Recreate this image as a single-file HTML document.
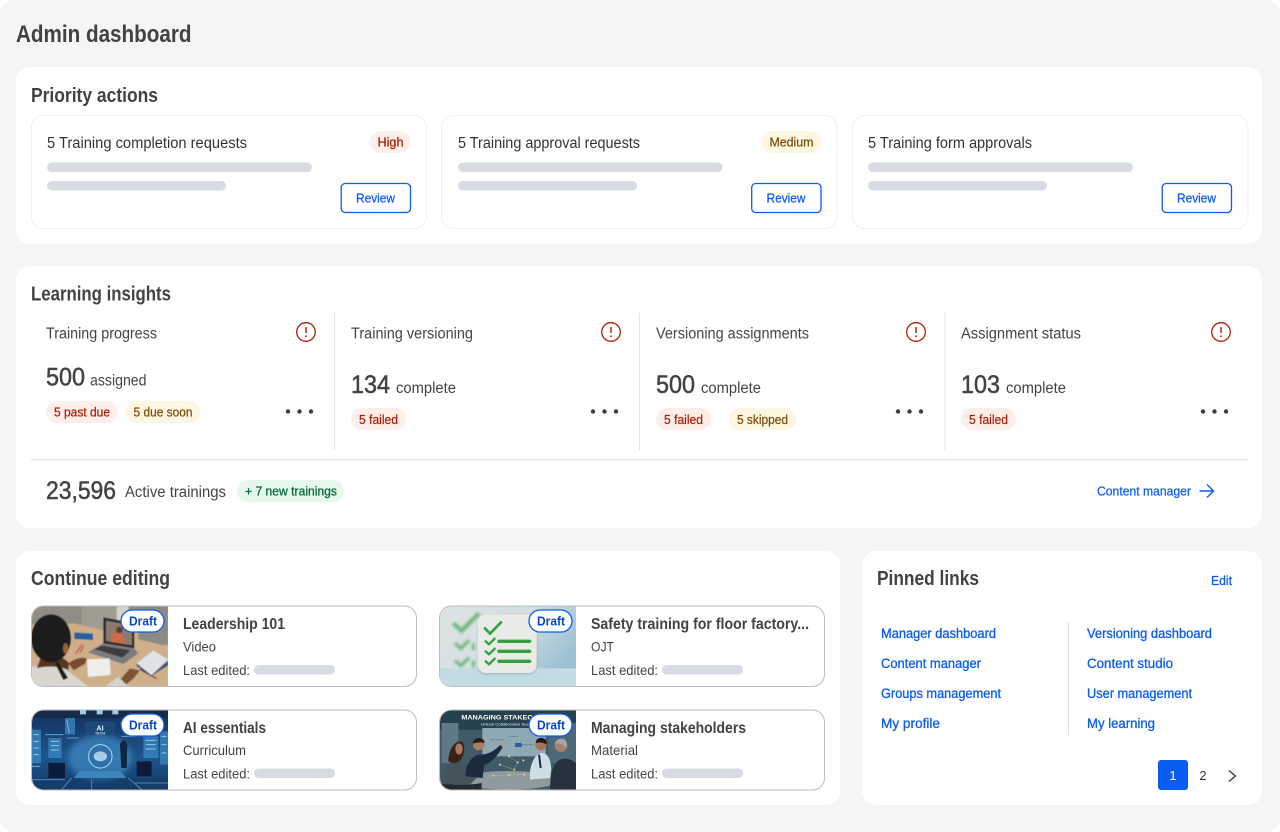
<!DOCTYPE html>
<html lang="en">
<head>
<meta charset="utf-8">
<title>Admin dashboard</title>
<style>
html,body{margin:0;padding:0;background:#fff;width:1280px;height:832px;overflow:hidden}
svg{display:block}
text{font-family:"Liberation Sans",Arial,sans-serif;white-space:pre}
.h1{font-size:24px;font-weight:700;fill:#424242}
.h2{font-size:20px;font-weight:700;fill:#424242}
.b{font-size:15.500px;fill:#333}
.g{font-size:15.500px;fill:#444}
.n{font-size:25px;fill:#424242;stroke:#424242;stroke-width:.5}
.u{font-size:15.500px;fill:#444}
.p{font-size:13px;stroke-width:.2}
.red{fill:#b01a00;stroke:#b01a00}
.amb{fill:#7a4a08;stroke:#7a4a08}
.grn{fill:#0a6b3a;stroke:#0a6b3a;stroke-width:.3}
.rv{font-size:13px;fill:#0b5cf0;stroke:#0b5cf0;stroke-width:.25}
.l{font-size:13.500px;fill:#0b5cf0;stroke:#0b5cf0;stroke-width:.3}
.t{font-size:15.500px;font-weight:700;fill:#424242}
.s{font-size:14px;fill:#444}
.d{font-size:13px;font-weight:700;fill:#0b46b8}
</style>
</head>
<body>
<svg width="1280" height="832" viewBox="0 0 1280 832" xmlns="http://www.w3.org/2000/svg">
<defs>
  <clipPath id="c1"><path d="M168 606H44a12 12 0 0 0-12 12v56a12 12 0 0 0 12 12h124z"/></clipPath>
  <clipPath id="c2"><path d="M168 710H44a12 12 0 0 0-12 12v56a12 12 0 0 0 12 12h124z"/></clipPath>
  <clipPath id="c3"><path d="M576 606H452a12 12 0 0 0-12 12v56a12 12 0 0 0 12 12h124z"/></clipPath>
  <clipPath id="c4"><path d="M576 710H452a12 12 0 0 0-12 12v56a12 12 0 0 0 12 12h124z"/></clipPath>
  <filter id="soft" x="-5%" y="-5%" width="110%" height="110%"><feGaussianBlur stdDeviation="1.800"/></filter>
  <filter id="soft2" x="-5%" y="-5%" width="110%" height="110%"><feGaussianBlur stdDeviation="1"/></filter>
  <filter id="bl3"><feGaussianBlur stdDeviation="4"/></filter>
  <filter id="glow"><feGaussianBlur stdDeviation="9"/></filter>
  <linearGradient id="chk" x1="0" y1="0" x2="1" y2=".5">
    <stop offset="0" stop-color="#dfe3e3"/><stop offset=".55" stop-color="#d3dfe3"/><stop offset="1" stop-color="#9dc0d3"/>
  </linearGradient>
  <linearGradient id="ai" x1="0" y1="0" x2="0" y2="1">
    <stop offset="0" stop-color="#14305a"/><stop offset=".6" stop-color="#1f558e"/><stop offset="1" stop-color="#123a66"/>
  </linearGradient>
</defs>

<rect x="0" y="0" width="1280" height="832" rx="14" fill="#f5f5f5"/>
<text class="h1" x="16" y="42" textLength="175.500" lengthAdjust="spacingAndGlyphs">Admin dashboard</text>

<!-- Priority actions -->
<rect x="16" y="67" width="1246" height="177" rx="14" fill="#fff"/>
<text class="h2" x="31" y="102" textLength="127" lengthAdjust="spacingAndGlyphs">Priority actions</text>

<g fill="#fff" stroke="#f0f0f0">
  <rect x="31.500" y="115.500" width="395" height="113" rx="12"/>
  <rect x="441.500" y="115.500" width="395.500" height="113" rx="12"/>
  <rect x="852.500" y="115.500" width="395.500" height="113" rx="12"/>
</g>
<text class="b" x="47" y="148" textLength="200" lengthAdjust="spacingAndGlyphs">5 Training completion requests</text>
<text class="b" x="458" y="148" textLength="182" lengthAdjust="spacingAndGlyphs">5 Training approval requests</text>
<text class="b" x="868" y="148" textLength="164" lengthAdjust="spacingAndGlyphs">5 Training form approvals</text>

<rect x="370" y="131" width="40.500" height="22" rx="11" fill="#fdeeea"/>
<text class="p red" x="377.500" y="146.500" textLength="26" lengthAdjust="spacingAndGlyphs">High</text>
<rect x="762" y="131" width="59" height="22" rx="11" fill="#fdf6e0"/>
<text class="p amb" x="769.500" y="146.500" textLength="44" lengthAdjust="spacingAndGlyphs">Medium</text>

<g fill="#d8dbe2">
  <rect x="47" y="162.500" width="265" height="9.500" rx="4.750"/>
  <rect x="47" y="181" width="179" height="9.500" rx="4.750"/>
  <rect x="458" y="162.500" width="264.500" height="9.500" rx="4.750"/>
  <rect x="458" y="181" width="179" height="9.500" rx="4.750"/>
  <rect x="868" y="162.500" width="265" height="9.500" rx="4.750"/>
  <rect x="868" y="181" width="179" height="9.500" rx="4.750"/>
</g>
<g fill="#fff" stroke="#0b5cf0" stroke-width="1.300">
  <rect x="341.200" y="183.500" width="69.300" height="29" rx="4"/>
  <rect x="751.700" y="183.500" width="69.300" height="29" rx="4"/>
  <rect x="1162.200" y="183.500" width="69.300" height="29" rx="4"/>
</g>
<text class="rv" x="356" y="202.500" textLength="39" lengthAdjust="spacingAndGlyphs">Review</text>
<text class="rv" x="766.500" y="202.500" textLength="39" lengthAdjust="spacingAndGlyphs">Review</text>
<text class="rv" x="1177" y="202.500" textLength="39" lengthAdjust="spacingAndGlyphs">Review</text>

<!-- Learning insights -->
<rect x="16" y="266" width="1246" height="262" rx="14" fill="#fff"/>
<text class="h2" x="31" y="300.500" textLength="140" lengthAdjust="spacingAndGlyphs">Learning insights</text>
<g fill="#e4e4e4">
  <rect x="334" y="313" width="1" height="137"/>
  <rect x="639" y="313" width="1" height="137"/>
  <rect x="944.500" y="313" width="1" height="137"/>
  <rect x="31" y="459" width="1217" height="1.300"/>
</g>

<text class="g" x="46" y="338.500" textLength="111" lengthAdjust="spacingAndGlyphs">Training progress</text>
<text class="g" x="351" y="338.500" textLength="122" lengthAdjust="spacingAndGlyphs">Training versioning</text>
<text class="g" x="656" y="338.500" textLength="153" lengthAdjust="spacingAndGlyphs">Versioning assignments</text>
<text class="g" x="961" y="338.500" textLength="120" lengthAdjust="spacingAndGlyphs">Assignment status</text>

<g id="alerts" fill="none" stroke="#b01a00" stroke-width="1.300">
  <circle cx="306" cy="332" r="9.300"/><circle cx="611" cy="332" r="9.300"/><circle cx="916" cy="332" r="9.300"/><circle cx="1221" cy="332" r="9.300"/>
  <path d="M306 327v6M611 327v6M916 327v6M1221 327v6" stroke-width="1.400"/>
</g>
<g fill="#b01a00"><circle cx="306" cy="336.300" r=".9"/><circle cx="611" cy="336.300" r=".9"/><circle cx="916" cy="336.300" r=".9"/><circle cx="1221" cy="336.300" r=".9"/></g>

<text class="n" x="46" y="385.500" textLength="39" lengthAdjust="spacingAndGlyphs">500</text>
<text class="u" x="90" y="385.500" textLength="56.500" lengthAdjust="spacingAndGlyphs">assigned</text>
<text class="n" x="351" y="393" textLength="39" lengthAdjust="spacingAndGlyphs">134</text>
<text class="u" x="396" y="393" textLength="60" lengthAdjust="spacingAndGlyphs">complete</text>
<text class="n" x="656" y="393" textLength="39" lengthAdjust="spacingAndGlyphs">500</text>
<text class="u" x="701" y="393" textLength="60" lengthAdjust="spacingAndGlyphs">complete</text>
<text class="n" x="961" y="393" textLength="39" lengthAdjust="spacingAndGlyphs">103</text>
<text class="u" x="1006" y="393" textLength="60" lengthAdjust="spacingAndGlyphs">complete</text>

<rect x="46" y="401" width="72" height="22" rx="11" fill="#fdeeea"/>
<text class="p red" x="54" y="416.500" textLength="56" lengthAdjust="spacingAndGlyphs">5 past due</text>
<rect x="125.500" y="401" width="74.500" height="22" rx="11" fill="#fdf6e0"/>
<text class="p amb" x="133.500" y="416.500" textLength="59" lengthAdjust="spacingAndGlyphs">5 due soon</text>
<rect x="351" y="408" width="55" height="22" rx="11" fill="#fdeeea"/>
<text class="p red" x="359" y="424" textLength="39" lengthAdjust="spacingAndGlyphs">5 failed</text>
<rect x="656" y="408" width="55" height="22" rx="11" fill="#fdeeea"/>
<text class="p red" x="664" y="424" textLength="39" lengthAdjust="spacingAndGlyphs">5 failed</text>
<rect x="729" y="408" width="67" height="22" rx="11" fill="#fdf6e0"/>
<text class="p amb" x="737" y="424" textLength="51" lengthAdjust="spacingAndGlyphs">5 skipped</text>
<rect x="961" y="408" width="55" height="22" rx="11" fill="#fdeeea"/>
<text class="p red" x="969" y="424" textLength="39" lengthAdjust="spacingAndGlyphs">5 failed</text>

<g fill="#3d3d3d">
  <circle cx="288" cy="411.500" r="2.200"/><circle cx="299.500" cy="411.500" r="2.200"/><circle cx="311" cy="411.500" r="2.200"/>
  <circle cx="593" cy="411.500" r="2.200"/><circle cx="604.500" cy="411.500" r="2.200"/><circle cx="616" cy="411.500" r="2.200"/>
  <circle cx="898" cy="411.500" r="2.200"/><circle cx="909.500" cy="411.500" r="2.200"/><circle cx="921" cy="411.500" r="2.200"/>
  <circle cx="1203" cy="411.500" r="2.200"/><circle cx="1214.500" cy="411.500" r="2.200"/><circle cx="1226" cy="411.500" r="2.200"/>
</g>

<text class="n" x="46" y="499" textLength="70" lengthAdjust="spacingAndGlyphs">23,596</text>
<text class="u" x="125" y="497" textLength="101" lengthAdjust="spacingAndGlyphs">Active trainings</text>
<rect x="237" y="480" width="107" height="22" rx="11" fill="#e6f8ee"/>
<text class="p grn" x="245" y="495.500" textLength="92" lengthAdjust="spacingAndGlyphs">+ 7 new trainings</text>
<text class="rv" x="1097" y="495.500" textLength="94" lengthAdjust="spacingAndGlyphs">Content manager</text>
<path d="M1199.500 491h13.500M1207 484.500l6.500 6.500-6.500 6.500" fill="none" stroke="#0b5cf0" stroke-width="1.400"/>

<!-- Continue editing -->
<rect x="16" y="551" width="824" height="254" rx="14" fill="#fff"/>
<text class="h2" x="31" y="585" textLength="139" lengthAdjust="spacingAndGlyphs">Continue editing</text>

<!-- Card images -->
<g clip-path="url(#c1)">
  <g transform="translate(25 600) scale(.33333)" filter="url(#soft)">
    <rect x="0" y="15" width="430" height="245" fill="#cdb08e"/>
    <rect x="0" y="15" width="430" height="70" fill="#8f8d85"/>
    <rect x="170" y="15" width="130" height="75" fill="#a09c92"/>
    <rect x="275" y="15" width="35" height="70" fill="#d6d3cc"/>
    <rect x="340" y="15" width="90" height="120" fill="#8c8a84"/>
    <path d="M0 75L150 70 430 140V260H0z" fill="#cfae8a"/>
    <path d="M148 97l56 4v19l-56-3z" fill="#24619f"/>
    <path d="M235 52l93 17v76l-93-15z" fill="#2a2a2e"/>
    <path d="M243 62l78 14v60l-78-13z" fill="#8a7a70"/>
    <path d="M262 102c8-12 22-6 28 0l12 30-44-6z" fill="#d06a48"/>
    <circle cx="283" cy="90" r="10" fill="#5c3a28"/>
    <path d="M235 130l93 16 12 14-45 32-106-35z" fill="#7a7c7e"/>
    <path d="M232 137l84 14-24 22-84-26z" fill="#3a3c40"/>
    <path d="M186 178l68-3 3 50-68 6z" fill="#eeeeea"/>
    <path d="M335 190l50-38 44 26-50 48z" fill="#dfe3e5"/>
    <path d="M335 190l44 36 50-44v14l-50 32-44-30z" fill="#2c507c"/>
    <path d="M345 208l50 28" stroke="#222" stroke-width="3"/>
    <path d="M152 162l18-28M165 158l12-22" stroke="#c4503a" stroke-width="4"/>
    <path d="M0 205c35-12 90-12 125 5l65 50H0z" fill="#d8d6ce"/>
    <path d="M50 165c25-10 70 5 82 25l-2 20c-30-15-80-10-95-5z" fill="#5a3624"/>
    <ellipse cx="78" cy="115" rx="60" ry="72" fill="#1a1a1c"/>
    <path d="M90 190l25 50 14-6-30-50z" fill="#1b1b1d"/>
    <ellipse cx="122" cy="145" rx="8" ry="16" fill="#9a6238"/>
    <path d="M130 190c20-15 40-20 55-15l-4 16-35 20z" fill="#7a4b2e"/>
    <path d="M280 245l35-40 30 6-20 25-30 24z" fill="#7d5238"/>
    <path d="M240 260l40-30 30 30z" fill="#d5d3cb"/>
    <path d="M0 15h20v50H0z" fill="#a9a79f"/>
  </g>
</g>
<g clip-path="url(#c2)">
  <g transform="translate(25 703) scale(.33333)" filter="url(#soft2)">
    <rect x="0" y="20" width="430" height="240" fill="url(#ai)"/>
    <rect x="0" y="20" width="430" height="25" fill="#12294a"/>
    <path d="M165 20h18v14h-18zM215 20h18v14h-18zM262 20h18v14h-18z" fill="#9cc8ee"/>
    <ellipse cx="225" cy="165" rx="95" ry="70" fill="#4a9ad4" opacity=".55" filter="url(#glow)"/>
    <path d="M20 80h28v100H20zM70 105h40v60H70zM355 100h45v65h-45zM405 85h25v100h-25zM120 45h30v50h-30z" fill="#3b88c4" opacity=".75"/>
    <path d="M78 115h24M78 128h24M78 141h24M362 112h30M362 125h30M362 138h30M26 95h16M26 115h16M26 135h16M26 155h16M410 100h15M410 125h15M410 150h15" stroke="#a6dcf6" stroke-width="3" opacity=".8"/>
    <path d="M0 85l20-10v120l-20 10zM60 95h55M340 95h60M125 105h35M285 60h50M290 100h40" stroke="#7fc5ee" stroke-width="3" fill="none" opacity=".7"/>
    <path d="M180 55h90v40h-90z" fill="#1e4878"/>
    <text x="225" y="82" font-size="22" font-weight="700" text-anchor="middle" fill="#dff0ff" style="font-family:'Liberation Sans',sans-serif">AI</text>
    <text x="225" y="94" font-size="11" font-weight="700" text-anchor="middle" fill="#bcdcf5" style="font-family:'Liberation Sans',sans-serif">TECH</text>
    <circle cx="226" cy="160" r="35" fill="#2f6fa8" stroke="#a8def8" stroke-width="3"/>
    <ellipse cx="226" cy="160" rx="20" ry="15" fill="#a8cbe6"/>
    <path d="M70 180h50v45H70zM335 175h45v45h-45z" fill="#0d1f3a"/>
    <path d="M165 205h120l20 20H145z" fill="#3d86bd"/>
    <path d="M285 125c4-16 18-16 22 0l-2 70h-16z" fill="#0f2543"/>
    <path d="M140 225L110 260M310 225l40 35M0 230h120M330 240h100M200 230v30" stroke="#6fd0f5" stroke-width="3" fill="none"/>
    <path d="M125 50l8 40M20 190h25" stroke="#9cc8ee" stroke-width="3" opacity=".7"/>
    <rect x="0" y="225" width="430" height="35" fill="#123a66" opacity=".45"/>
  </g>
</g>
<g clip-path="url(#c3)">
  <g transform="translate(435 600) scale(.33333)" filter="url(#soft2)">
    <rect x="0" y="15" width="430" height="245" fill="url(#chk)"/>
    <rect x="0" y="205" width="430" height="55" fill="#c3dbe4"/>
    <g fill="none" stroke="#61b36c" filter="url(#bl3)" opacity=".85">
      <path d="M55 70l25 22 52-52" stroke-width="13"/>
      <path d="M60 130l18 15 24-24" stroke-width="10"/>
      <path d="M60 182l18 15 24-24" stroke-width="10"/>
      <path d="M115 130v20M115 182v20" stroke-width="9"/>
    </g>
    <rect x="128" y="45" width="177" height="178" rx="24" fill="#000" opacity=".16" filter="url(#bl3)"/>
    <rect x="128" y="43" width="177" height="176" rx="24" fill="#e9ebe7"/>
    <g fill="none" stroke="#35a041" stroke-linecap="round" stroke-linejoin="round">
      <path d="M150 85l15 16 33-34" stroke-width="8"/>
      <path d="M152 124l10 9 17-17" stroke-width="7"/>
      <path d="M152 154l10 9 17-17" stroke-width="7"/>
      <path d="M152 184l10 9 17-17" stroke-width="7"/>
      <path d="M192 124h92M192 154h92M192 184h92" stroke-width="10"/>
    </g>
  </g>
</g>
<g clip-path="url(#c4)">
  <g transform="translate(435 703) scale(.33333)" filter="url(#soft2)">
    <rect x="0" y="20" width="430" height="240" fill="#3f5a68"/>
    <rect x="0" y="20" width="430" height="60" fill="#27434f"/>
    <rect x="20" y="60" width="50" height="120" fill="#5d7a86"/>
    <rect x="142" y="75" width="190" height="85" fill="#8fa9b4"/>
    <rect x="340" y="60" width="90" height="120" fill="#4d6977"/>
    <g stroke="#6d8997" stroke-width="3"><path d="M165 110h40M220 100h30M255 125h40"/></g>
    <rect x="240" y="120" width="20" height="12" fill="#2d5d9a"/>
    <text x="79" y="50" font-size="18" font-weight="700" fill="#fff" textLength="215" lengthAdjust="spacingAndGlyphs" style="font-family:'Liberation Sans',sans-serif">MANAGING STAKEO</text>
    <text x="138" y="67" font-size="10" fill="#e8eef2" textLength="150" lengthAdjust="spacingAndGlyphs" style="font-family:'Liberation Sans',sans-serif">Unlock Collaborative Succ</text>
    <ellipse cx="220" cy="232" rx="150" ry="28" fill="#8d9a9e"/>
    <path d="M20 250c0-35 15-75 45-75 22 0 48 35 60 50l-30 30H20z" fill="#45525c"/>
    <path d="M40 175c0-30 15-60 35-60 14 0 15 22 10 40-10 25-25 30-45 20z" fill="#3a2416"/>
    <ellipse cx="72" cy="138" rx="11" ry="17" fill="#a87a60"/>
    <path d="M92 205c5-30 25-50 45-50 25 0 45-15 60-30l6 8c-15 24-35 48-55 52l-5 40-51-5z" fill="#1e2c3c"/>
    <circle cx="131" cy="125" r="17" fill="#a87e66"/>
    <path d="M114 122c0-14 13-18 22-16s14 8 12 14c-10-3-22-3-34 2z" fill="#2a1a10"/>
    <path d="M198 128l10-4" stroke="#c0937a" stroke-width="6"/>
    <path d="M285 205c5-35 20-55 36-55 15 0 26 14 28 50l-4 25-60 5z" fill="#cfdde5"/>
    <path d="M312 155l5 40" stroke="#1c2c48" stroke-width="6"/>
    <circle cx="318" cy="125" r="17" fill="#a07558"/>
    <path d="M302 120c0-14 15-18 24-14s10 12 8 18c-8-5-20-8-32-4z" fill="#1e1610"/>
    <path d="M345 260c0-55 12-85 35-92 20-5 50 8 50 30v62z" fill="#27323e"/>
    <circle cx="378" cy="128" r="19" fill="#a68070"/>
    <path d="M360 122c2-14 22-20 32-10 5 6 4 18 2 22-8-10-22-14-34-12z" fill="#a5a7a8"/>
    <path d="M0 240c30 4 90 10 140 0v20H0z" fill="#222b33"/>
    <g fill="#f2cf8c"><circle cx="195" cy="185" r="3"/><circle cx="222" cy="160" r="3"/><circle cx="248" cy="178" r="3"/><circle cx="265" cy="172" r="3"/><circle cx="238" cy="200" r="3"/><circle cx="175" cy="218" r="3"/><circle cx="222" cy="216" r="3"/><circle cx="268" cy="215" r="3"/></g>
    <path d="M222 160l26 18-10 22-16 16M195 185l43 15M175 218l47-2 46-1" stroke="#d9c79a" stroke-width="1" fill="none"/>
  </g>
</g>

<g fill="none" stroke="#bdbdbd">
  <rect x="31.500" y="606" width="385" height="80.500" rx="12"/>
  <rect x="31.500" y="710" width="385" height="80" rx="12"/>
  <rect x="439.500" y="606" width="385" height="80.500" rx="12"/>
  <rect x="439.500" y="710" width="385" height="80" rx="12"/>
</g>

<g fill="#fff" stroke="#0b5cf0" stroke-width="1.300">
  <rect x="121" y="610" width="43" height="22" rx="11"/>
  <rect x="121" y="714" width="43" height="22" rx="11"/>
  <rect x="529" y="610" width="43" height="22" rx="11"/>
  <rect x="529" y="714" width="43" height="22" rx="11"/>
</g>
<text class="d" x="129" y="625.500" textLength="28" lengthAdjust="spacingAndGlyphs">Draft</text>
<text class="d" x="129" y="729.500" textLength="28" lengthAdjust="spacingAndGlyphs">Draft</text>
<text class="d" x="537" y="625.500" textLength="28" lengthAdjust="spacingAndGlyphs">Draft</text>
<text class="d" x="537" y="729.500" textLength="28" lengthAdjust="spacingAndGlyphs">Draft</text>

<text class="t" x="183" y="629" textLength="102" lengthAdjust="spacingAndGlyphs">Leadership 101</text>
<text class="s" x="183" y="651.500" textLength="33" lengthAdjust="spacingAndGlyphs">Video</text>
<text class="s" x="183" y="675" textLength="67" lengthAdjust="spacingAndGlyphs">Last edited:</text>
<text class="t" x="183" y="733" textLength="83" lengthAdjust="spacingAndGlyphs">AI essentials</text>
<text class="s" x="183" y="755" textLength="63" lengthAdjust="spacingAndGlyphs">Curriculum</text>
<text class="s" x="183" y="778.500" textLength="67" lengthAdjust="spacingAndGlyphs">Last edited:</text>
<text class="t" x="591" y="629" textLength="218" lengthAdjust="spacingAndGlyphs">Safety training for floor factory...</text>
<text class="s" x="591" y="651.500" textLength="23" lengthAdjust="spacingAndGlyphs">OJT</text>
<text class="s" x="591" y="675" textLength="67" lengthAdjust="spacingAndGlyphs">Last edited:</text>
<text class="t" x="591" y="733" textLength="155" lengthAdjust="spacingAndGlyphs">Managing stakeholders</text>
<text class="s" x="591" y="755" textLength="47" lengthAdjust="spacingAndGlyphs">Material</text>
<text class="s" x="591" y="778.500" textLength="67" lengthAdjust="spacingAndGlyphs">Last edited:</text>
<g fill="#d8dbe2">
  <rect x="254" y="665" width="81" height="9.500" rx="4.750"/>
  <rect x="254" y="768.500" width="81" height="9.500" rx="4.750"/>
  <rect x="662" y="665" width="81" height="9.500" rx="4.750"/>
  <rect x="662" y="768.500" width="81" height="9.500" rx="4.750"/>
</g>

<!-- Pinned links -->
<rect x="862" y="551" width="400" height="254" rx="14" fill="#fff"/>
<text class="h2" x="877" y="585" textLength="102" lengthAdjust="spacingAndGlyphs">Pinned links</text>
<text class="rv" x="1211" y="585" textLength="21" lengthAdjust="spacingAndGlyphs">Edit</text>
<rect x="1068" y="622" width="1" height="112" fill="#e0e0e0"/>
<text class="l" x="881" y="638" textLength="115" lengthAdjust="spacingAndGlyphs">Manager dashboard</text>
<text class="l" x="881" y="668" textLength="100" lengthAdjust="spacingAndGlyphs">Content manager</text>
<text class="l" x="881" y="698" textLength="120" lengthAdjust="spacingAndGlyphs">Groups management</text>
<text class="l" x="881" y="728" textLength="59" lengthAdjust="spacingAndGlyphs">My profile</text>
<text class="l" x="1087" y="638" textLength="125" lengthAdjust="spacingAndGlyphs">Versioning dashboard</text>
<text class="l" x="1087" y="668" textLength="86" lengthAdjust="spacingAndGlyphs">Content studio</text>
<text class="l" x="1087" y="698" textLength="105" lengthAdjust="spacingAndGlyphs">User management</text>
<text class="l" x="1087" y="728" textLength="68" lengthAdjust="spacingAndGlyphs">My learning</text>

<rect x="1158" y="760" width="30" height="30" rx="3" fill="#0b5cf0"/>
<text x="1173" y="780" font-size="13" text-anchor="middle" fill="#fff">1</text>
<text x="1203" y="780" font-size="13" text-anchor="middle" fill="#333">2</text>
<path d="M1229 770.500l6.500 5.500-6.500 5.500" fill="none" stroke="#333" stroke-width="1.300"/>
</svg>
</body>
</html>
